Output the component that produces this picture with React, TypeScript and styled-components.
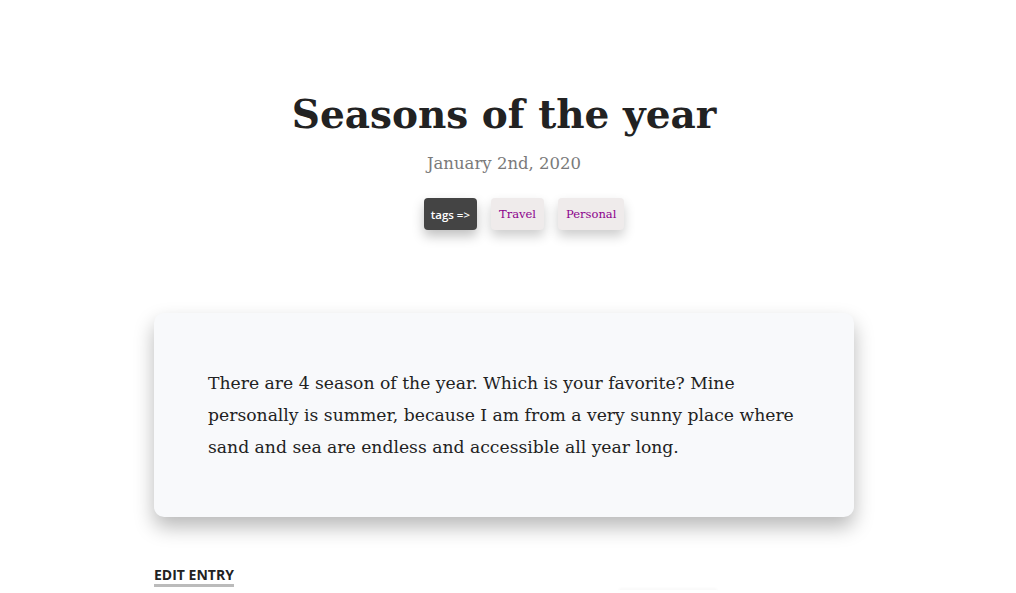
import styled, { createGlobalStyle } from "styled-components";

const GlobalStyle = createGlobalStyle`
  body {
    margin: 0;
    background: #ffffff;
    font-family: "DejaVu Serif", "Liberation Serif", serif;
    color: #222222;
    overflow: hidden;
  }
`;

const tags = ["Travel", "Personal"];

export default function App() {
  return (
    <>
      <GlobalStyle />
      <Page>
        <Header>
          <Title>Seasons of the year</Title>
          <DateLine>January 2nd, 2020</DateLine>
          <TagList>
            <TagLabel>tags =&gt;</TagLabel>
            {tags.map((tag) => (
              <Tag key={tag}>{tag}</Tag>
            ))}
          </TagList>
        </Header>
        <Card>
          <Body>
            There are 4 season of the year. Which is your favorite? Mine
            personally is summer, because I am from a very sunny place where
            sand and sea are endless and accessible all year long.
          </Body>
        </Card>
        <Actions>
          <EditLink href="#">Edit Entry</EditLink>
        </Actions>
        <FormRow>
          <FormBox />
        </FormRow>
      </Page>
    </>
  );
}

const Page = styled.div`
  width: 700px;
  margin: 0 auto;
  padding-right: 8px;
  padding-top: 84px;
`;

const Header = styled.header`
  display: flex;
  flex-direction: column;
  align-items: center;
`;

const Title = styled.h1`
  margin: 0;
  font-size: 39px;
  font-weight: 700;
  line-height: 60px;
  color: #222222;
`;

const DateLine = styled.p`
  margin: 0;
  margin-top: 6px;
  font-size: 16.5px;
  line-height: 28px;
  color: #7a7a7a;
`;

const TagList = styled.ul`
  display: flex;
  gap: 14px;
  margin: 20px 0 0;
  padding: 0 0 0 40px;
  list-style: none;
`;

const TagLabel = styled.li`
  height: 32px;
  padding: 0 7px;
  display: flex;
  align-items: center;
  border-radius: 4px;
  background: #444444;
  color: #ffffff;
  font-family: "Open Sans", "Noto Sans", sans-serif;
  font-size: 11.5px;
  font-weight: 600;
  box-shadow: 0 6px 12px rgba(0, 0, 0, 0.25);
`;

const Tag = styled.li`
  height: 32px;
  padding: 0 8px;
  display: flex;
  align-items: center;
  border-radius: 4px;
  background: #efebeb;
  color: #8b008b;
  font-size: 11.5px;
  box-shadow: 0 6px 12px rgba(0, 0, 0, 0.2);
`;

const Card = styled.section`
  margin-top: 83px;
  padding: 54px;
  background: #f8f9fb;
  border-radius: 10px;
  box-shadow: 0 10px 20px rgba(0, 0, 0, 0.28);
`;

const Body = styled.p`
  margin: 0;
  font-size: 17.2px;
  line-height: 32px;
  color: #222222;
`;

const Actions = styled.div`
  margin-top: 48px;
  display: flex;
`;

const EditLink = styled.a`
  font-family: "Open Sans", "Noto Sans", sans-serif;
  font-size: 14px;
  font-weight: 700;
  text-transform: uppercase;
  color: #222222;
  text-decoration: none;
  border-bottom: 3px solid #bbbbbb;
`;

const FormRow = styled.div`
  margin-top: 3px;
  padding-left: 465px;
`;

const FormBox = styled.div`
  width: 98px;
  height: 1px;
  background: #ffffff;
  box-shadow: 0 -1px 3px rgba(0, 0, 0, 0.08);
`;
